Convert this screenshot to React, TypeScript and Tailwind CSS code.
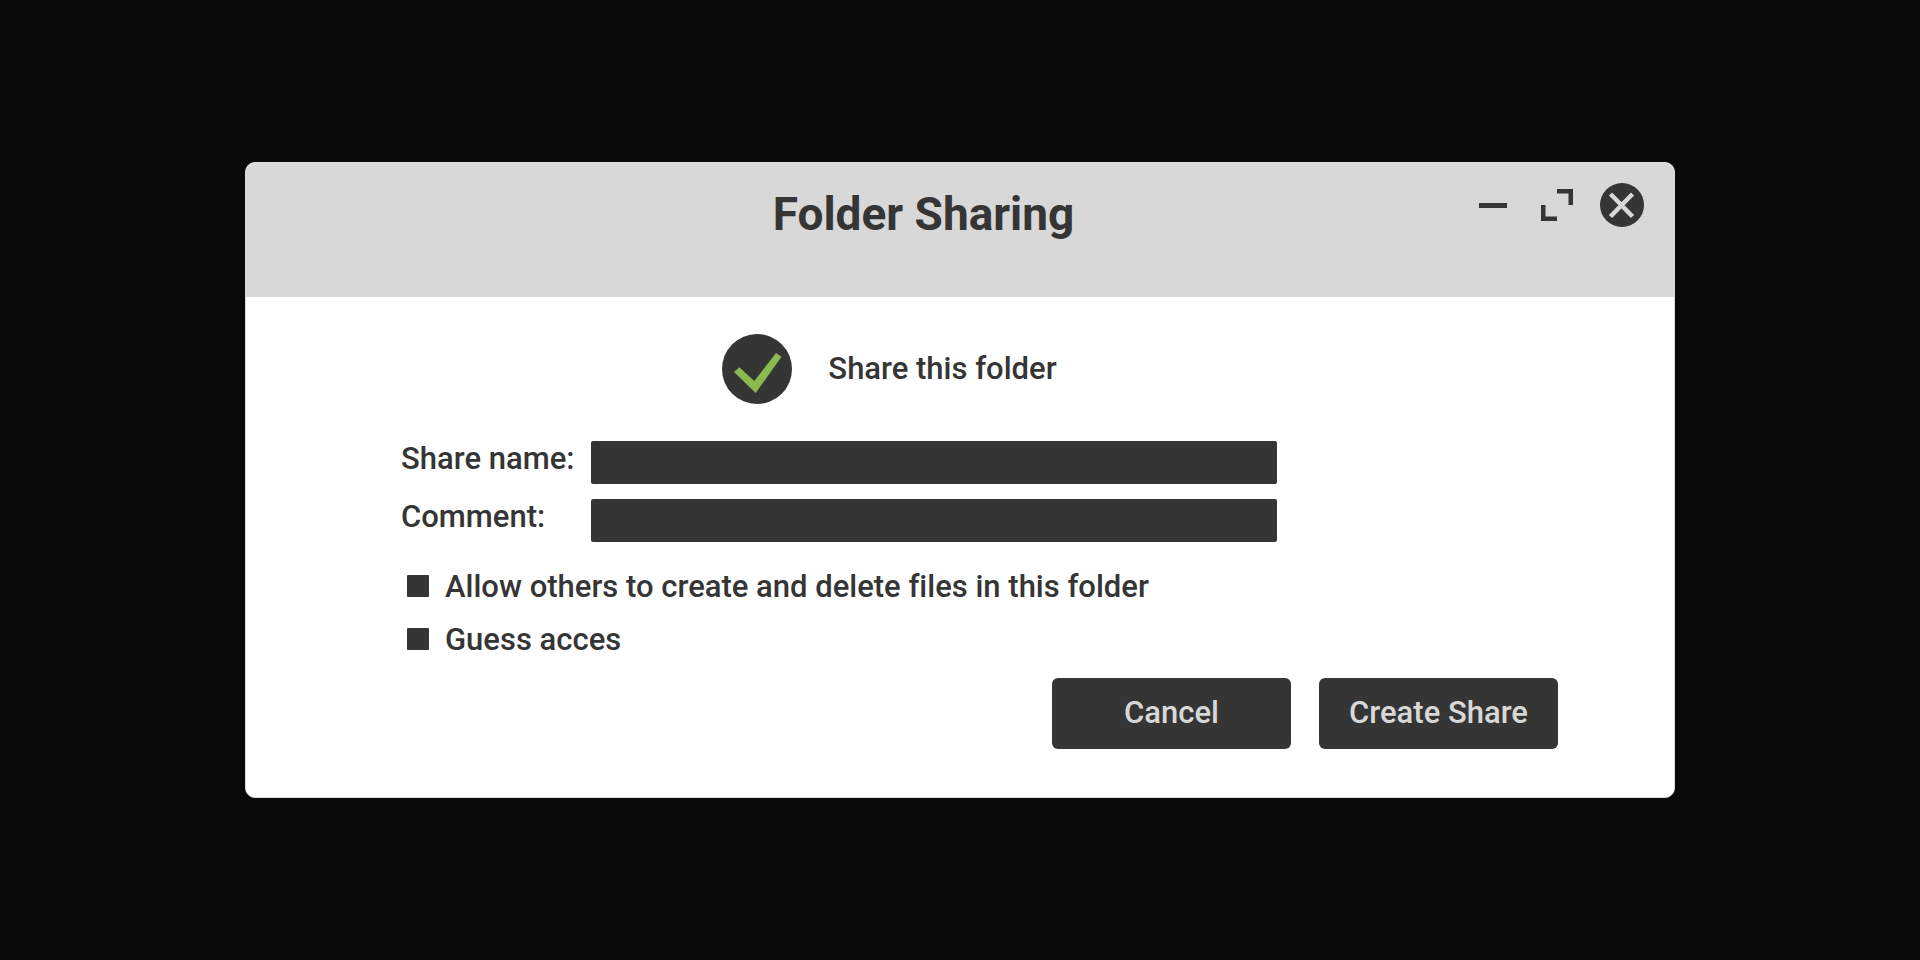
import { useState } from 'react';

const fields = [
  { id: 'share-name', label: 'Share name:' },
  { id: 'comment', label: 'Comment:' },
];

const options = [
  { id: 'allow-edit', label: 'Allow others to create and delete files in this folder' },
  { id: 'guest-access', label: 'Guess acces' },
];

const actions = ['Cancel', 'Create Share'];

function WindowControls() {
  return (
    <div className="flex items-center shrink-0 h-11">
      <button type="button" aria-label="Minimize" className="mr-[34px]">
        <svg className="block" width="28" height="5" viewBox="0 0 28 5">
          <rect width="28" height="5" fill="#353535" />
        </svg>
      </button>
      <button type="button" aria-label="Maximize" className="mr-[27px]">
        <svg className="block" width="32" height="32" viewBox="0 0 32 32" fill="#353535">
          <path d="M16 0H32V16H27.5V4.5H16Z" />
          <path d="M0 16H4.5V27.5H16V32H0Z" />
        </svg>
      </button>
      <button type="button" aria-label="Close">
        <svg className="block" width="44" height="44" viewBox="0 0 44 44">
          <circle cx="22" cy="22" r="22" fill="#353535" />
          <path d="M10.5 11L32.5 33.5M32.5 11L10.5 33.5" stroke="#d8d8d8" strokeWidth="4.5" />
        </svg>
      </button>
    </div>
  );
}

export default function App() {
  const [shared, setShared] = useState(true);

  return (
    <main className="min-h-screen flex items-center justify-center bg-[#090909] font-['Roboto',sans-serif] text-[#353535] [font-variant-ligatures:none]">
      <section className="w-full max-w-[1430px] rounded-[10px] border border-[#dcdcdc] bg-white overflow-hidden">
        {/* Title bar */}
        <header className="flex items-start bg-[#d8d8d8] pt-5 pb-[52px] pl-[122px] pr-[30px]">
          <h1 className="flex-1 text-center text-[46px] leading-[62px] font-bold">Folder Sharing</h1>
          <WindowControls />
        </header>

        <form className="pt-[37px] pb-12 pl-[155px] pr-[116px] text-[31px] leading-9 font-medium" onSubmit={(e) => e.preventDefault()}>
          <div className="flex justify-center pr-[180px]">
            <label className="flex items-center gap-9 cursor-pointer">
              <input
                type="checkbox"
                className="sr-only"
                checked={shared}
                onChange={(e) => setShared(e.target.checked)}
              />
              <svg className="shrink-0" width="70" height="70" viewBox="0 0 70 70">
                <circle cx="35" cy="35" r="35" fill="#353535" />
                {shared && <path d="M12 38L17.3 33.3L32.3 47L54 19L59.5 22.8L33.7 59Z" fill="#8bb84f" />}
              </svg>
              Share this folder
            </label>
          </div>

          {/* Text fields */}
          <div className="mt-[37px] flex flex-col gap-[15px]">
            {fields.map((field) => (
              <div key={field.id} className="flex items-start">
                <label htmlFor={field.id} className="w-[190px] shrink-0">{field.label}</label>
                <input
                  id={field.id}
                  type="text"
                  className="flex-1 max-w-[686px] h-[43px] px-3 rounded-[2px] bg-[#353535] text-2xl text-[#d8d8d8] outline-none"
                />
              </div>
            ))}
          </div>

          {/* Permissions */}
          <div className="mt-[27px] pl-[6px] flex flex-col gap-[17px]">
            {options.map((option) => (
              <div key={option.id} className="flex items-start gap-4">
                <input id={option.id} type="checkbox" className="appearance-none shrink-0 mt-1.5 w-[22px] h-[22px] rounded-[1px] bg-[#353535]" />
                <label htmlFor={option.id}>{option.label}</label>
              </div>
            ))}
          </div>

          <div className="mt-5 flex justify-end gap-7">
            {actions.map((action) => (
              <button key={action} type="button" className="w-[239px] h-[71px] pb-0.5 rounded-md bg-[#353535] text-[#d8d8d8]">
                {action}
              </button>
            ))}
          </div>
        </form>
      </section>
    </main>
  );
}
